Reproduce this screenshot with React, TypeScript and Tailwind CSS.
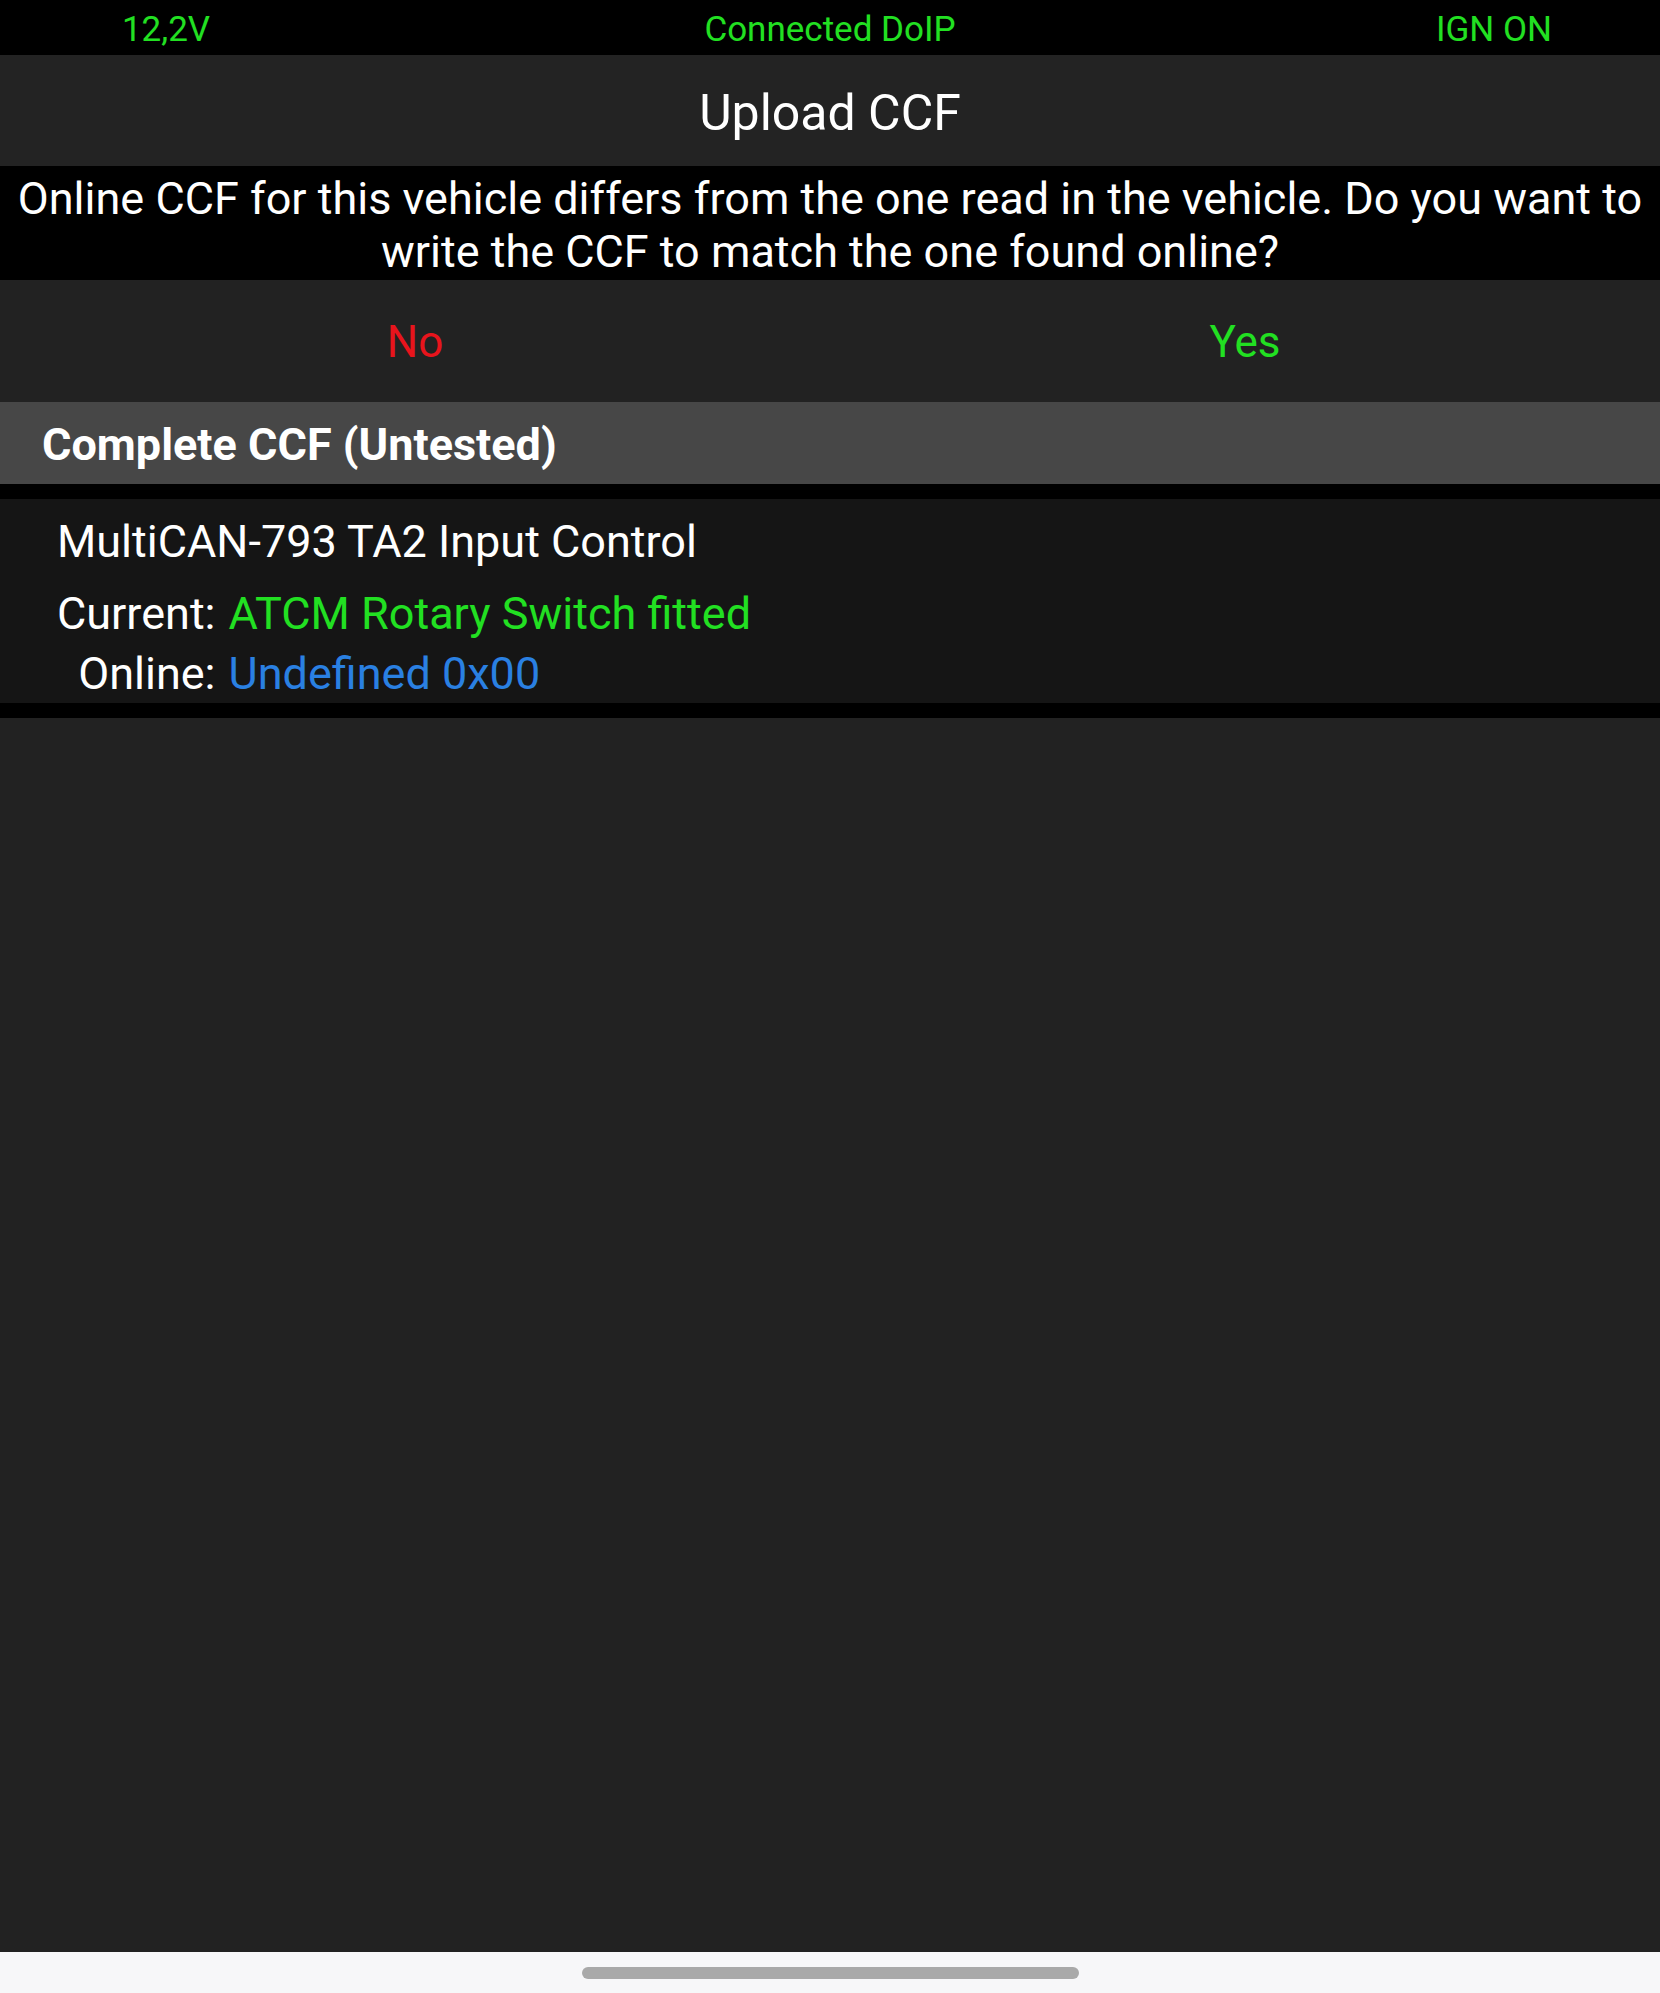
export default function App() {
  return (
    <div className="flex min-h-[1993px] w-full flex-col bg-[#222222] font-['Roboto',sans-serif] text-white">
      {/* Status bar */}
      <div className="flex h-[55px] bg-black pt-[4px] text-[35px] leading-[51px] text-[#22e022]">
        <div className="w-[332px] text-center">12,2V</div>
        <div className="flex-1 text-center">Connected DoIP</div>
        <div className="w-[332px] text-center">IGN ON</div>
      </div>

      {/* Title */}
      <div className="h-[111px] bg-[#232323] pt-[5px] text-center text-[50px] leading-[106px]">Upload CCF</div>

      {/* Message */}
      <div className="bg-black px-2 pt-[6px] pb-[2px] text-center text-[45px] leading-[53px]">
        Online CCF for this vehicle differs from the one read in the vehicle. Do you want to write the CCF to match the one found online?
      </div>

      {/* Buttons */}
      <div className="flex h-[122px] bg-[#222222] pt-[2px] text-[44px] leading-[120px]">
        <button className="flex-1 text-center text-[#e8141c]">No</button>
        <button className="flex-1 text-center text-[#22e022]">Yes</button>
      </div>

      {/* Section header */}
      <div className="h-[82px] bg-[#474747] pl-[42px] pt-[4px] text-[45px] font-bold leading-[78px]">Complete CCF (Untested)</div>

      {/* Item */}
      <div className="border-y-[15px] border-black bg-[#151515] pl-[57px] pt-[13px]">
        <div className="text-[45px] leading-[60px]">MultiCAN-793 TA2 Input Control</div>
        <div className="mt-[12px] grid grid-cols-[auto_1fr] text-[45px]">
          <div className="text-right leading-[60px]">Current:</div>
          <div className="pl-[13px] leading-[60px] text-[#22e022]">ATCM Rotary Switch fitted</div>
          <div className="text-right leading-[59px]">Online:</div>
          <div className="pl-[13px] leading-[59px] text-[#2a80e2]">Undefined 0x00</div>
        </div>
      </div>

      <div className="flex-1 bg-[#222222]" />

      {/* Navigation bar */}
      <div className="flex h-[41px] items-center justify-center bg-[#f7f7f9]">
        <div className="h-[12px] w-[497px] rounded-full bg-[#a9a9a9]" />
      </div>
    </div>
  );
}
